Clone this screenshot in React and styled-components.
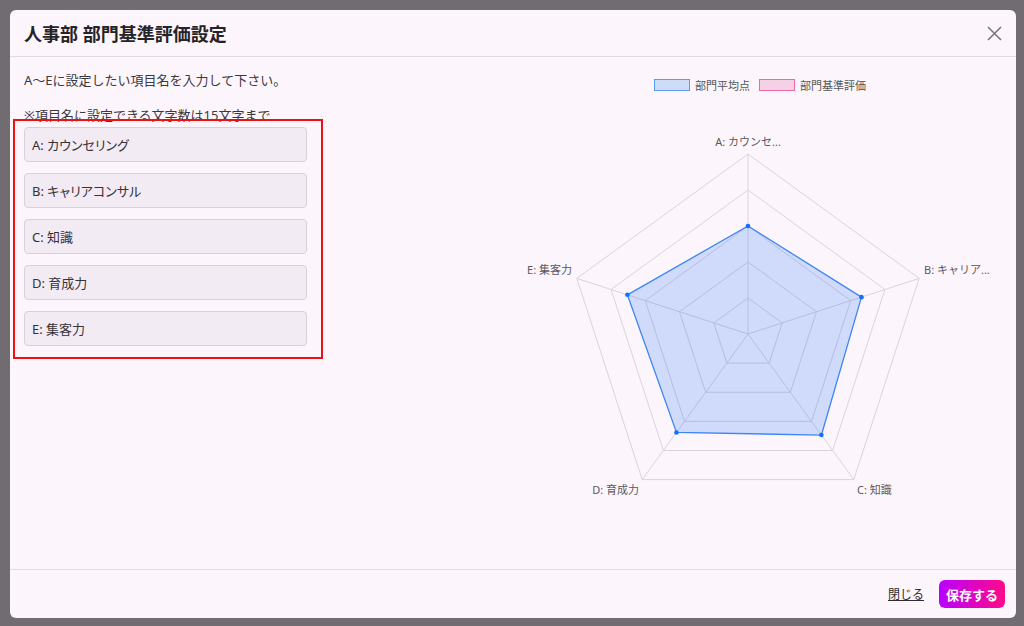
import React from 'react';
import styled, { createGlobalStyle } from 'styled-components';

const GlobalStyle = createGlobalStyle`
    html, body {
        margin: 0;
        padding: 0;
        background: #716c71;
        font-family: "Noto Sans", "Noto Sans CJK JP", sans-serif;
    }
    * { box-sizing: border-box; }
`;

const items = [
    { key: 'A', label: 'カウンセリング', short: 'A: カウンセ...', value: 108 },
    { key: 'B', label: 'キャリアコンサル', short: 'B: キャリア...', value: 119.3 },
    { key: 'C', label: '知識', short: 'C: 知識', value: 124.9 },
    { key: 'D', label: '育成力', short: 'D: 育成力', value: 121.7 },
    { key: 'E', label: '集客力', short: 'E: 集客力', value: 126.8 },
];

const Page = styled.div`
    height: 626px;
    padding: 10px 8px 8px 10px;
`;

const Modal = styled.div`
    height: 608px;
    background: #fcf6fc;
    border-radius: 6px;
    display: flex;
    flex-direction: column;
    overflow: hidden;
`;

const Header = styled.div`
    height: 47px;
    flex: 0 0 47px;
    display: flex;
    align-items: center;
    justify-content: space-between;
    padding: 0 14px 0 14px;
    border-bottom: 1px solid #e2dae3;
`;

const Title = styled.h1`
    margin: 0;
    font-size: 18px;
    font-weight: 700;
    color: #262326;
`;

const CloseButton = styled.button`
    border: none;
    background: none;
    padding: 0;
    width: 16px;
    height: 16px;
    display: flex;
    align-items: center;
    justify-content: center;
    cursor: pointer;
`;

const Body = styled.div`
    flex: 1;
    display: flex;
    padding: 0 14px;
`;

const LeftColumn = styled.div`
    width: 283px;
    padding-top: 14px;
`;

const Text = styled.p`
    margin: 0 0 ${props => props.$gap || 0}px;
    font-size: 13px;
    line-height: 18px;
    color: #3c383c;
`;

const InputGroup = styled.div`
    position: relative;
    margin-top: 3px;
    display: flex;
    flex-direction: column;
    gap: 11px;
`;

const Highlight = styled.div`
    position: absolute;
    top: -8px;
    left: -11px;
    right: -16px;
    bottom: -13px;
    border: 2px solid #f01010;
    pointer-events: none;
`;

const Input = styled.input`
    height: 35px;
    width: 100%;
    padding: 0 7px;
    border: 1px solid #d8d1da;
    border-radius: 4px;
    background: #f2ebf4;
    font-family: inherit;
    font-size: 13px;
    font-feature-settings: "palt";
    color: #363236;
    outline: none;
`;

const ChartColumn = styled.div`
    flex: 0 0 484px;
    margin-left: auto;
    display: flex;
    flex-direction: column;
    align-items: center;
    padding-top: 21px;
`;

const Legend = styled.div`
    display: flex;
    align-items: center;
    gap: 9px;
    height: 13px;
    margin-bottom: 9px;
`;

const LegendItem = styled.span`
    display: flex;
    align-items: center;
    gap: 5px;
    font-size: 11px;
    color: #555;
`;

const Swatch = styled.span`
    width: 36px;
    height: 12px;
    border: 1.5px solid ${props => props.$stroke};
    background: ${props => props.$fill};
`;

const ChartSvg = styled.svg`
    display: block;
    align-self: flex-start;
    font-family: "Noto Sans", "Noto Sans CJK JP", sans-serif;
`;

const Footer = styled.div`
    height: 49px;
    flex: 0 0 49px;
    border-top: 1px solid #e2dae3;
    display: flex;
    align-items: center;
    justify-content: flex-end;
    gap: 15px;
    padding-right: 11px;
`;

const LinkButton = styled.button`
    border: none;
    background: none;
    padding: 0;
    font-family: inherit;
    font-size: 12px;
    color: #2e2b2e;
    text-decoration: underline;
    cursor: pointer;
`;

const SaveButton = styled.button`
    height: 28px;
    padding: 0 7px;
    border: none;
    border-radius: 6px;
    background: linear-gradient(90deg, #b800ff, #ff0a88);
    color: #fff;
    font-family: inherit;
    font-size: 13px;
    font-weight: 700;
    cursor: pointer;
`;

const CX = 230;
const CY = 234;
const R = 180;

function pt(i, r) {
    const a = (-90 + i * 72) * Math.PI / 180;
    return [CX + r * Math.cos(a), CY + r * Math.sin(a)];
}

function ring(r) {
    return items.map((_, i) => pt(i, r).join(',')).join(' ');
}

const labelPos = [
    { x: 230, y: 46, anchor: 'middle' },
    { x: 406, y: 174, anchor: 'start' },
    { x: 339, y: 394, anchor: 'start' },
    { x: 121, y: 394, anchor: 'end' },
    { x: 54, y: 174, anchor: 'end' },
];

function RadarChart() {
    const data = items.map((it, i) => pt(i, it.value));
    return (
        <ChartSvg width="484" height="460" viewBox="0 0 484 460">
            {[36, 72, 108, 144, 180].map(r => (
                <polygon key={r} points={ring(r)} fill="none" stroke="#d9d3db" strokeWidth="1" />
            ))}
            {items.map((_, i) => {
                const [x, y] = pt(i, R);
                return <line key={i} x1={CX} y1={CY} x2={x} y2={y} stroke="#d9d3db" strokeWidth="1" />;
            })}
            <polygon
                points={data.map(p => p.join(',')).join(' ')}
                fill="rgba(54, 120, 246, 0.22)"
                stroke="#3d86f5"
                strokeWidth="1.3"
            />
            {data.map(([x, y], i) => (
                <circle key={i} cx={x} cy={y} r="2.3" fill="#1470ff" />
            ))}
            {items.map((it, i) => (
                <text
                    key={it.key}
                    x={labelPos[i].x}
                    y={labelPos[i].y}
                    textAnchor={labelPos[i].anchor}
                    fontSize="11"
                    fill="#5c585c"
                >
                    {it.short}
                </text>
            ))}
        </ChartSvg>
    );
}

export default function App() {
    return (
        <Page>
            <GlobalStyle />
            <Modal>
                <Header>
                    <Title>人事部 部門基準評価設定</Title>
                    <CloseButton aria-label="閉じる">
                        <svg width="15" height="15" viewBox="0 0 15 15">
                            <path d="M1 1 L14 14 M14 1 L1 14" stroke="#777" strokeWidth="1.6" fill="none" />
                        </svg>
                    </CloseButton>
                </Header>
                <Body>
                    <LeftColumn>
                        <Text $gap={17}>A〜Eに設定したい項目名を入力して下さい。</Text>
                        <Text>※項目名に設定できる文字数は15文字まで</Text>
                        <InputGroup>
                            {items.map(it => (
                                <Input key={it.key} defaultValue={`${it.key}: ${it.label}`} />
                            ))}
                            <Highlight />
                        </InputGroup>
                    </LeftColumn>
                    <ChartColumn>
                        <Legend>
                            <LegendItem>
                                <Swatch $stroke="#5b9bf8" $fill="#cfdcf8" />
                                部門平均点
                            </LegendItem>
                            <LegendItem>
                                <Swatch $stroke="#e96aa6" $fill="#f6d0e4" />
                                部門基準評価
                            </LegendItem>
                        </Legend>
                        <RadarChart />
                    </ChartColumn>
                </Body>
                <Footer>
                    <LinkButton>閉じる</LinkButton>
                    <SaveButton>保存する</SaveButton>
                </Footer>
            </Modal>
        </Page>
    );
}
